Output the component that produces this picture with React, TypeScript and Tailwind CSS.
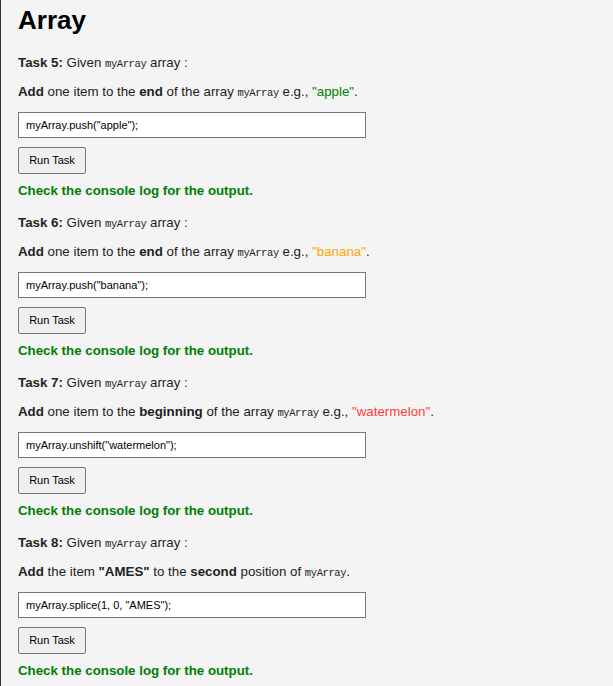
import React from 'react';

type Task = {
  num: number;
  desc: React.ReactNode;
  code: string;
};

const Code = ({ children }: { children: React.ReactNode }) => (
  <code className="font-['Liberation_Mono',monospace] text-[10.5px] tracking-[-0.4px]">{children}</code>
);

const tasks: Task[] = [
  {
    num: 5,
    desc: (
      <>
        <b>Add</b> one item to the <b>end</b> of the array <Code>myArray</Code> e.g.,{' '}
        <span className="text-[#008000]">"apple"</span>.
      </>
    ),
    code: 'myArray.push("apple");',
  },
  {
    num: 6,
    desc: (
      <>
        <b>Add</b> one item to the <b>end</b> of the array <Code>myArray</Code> e.g.,{' '}
        <span className="text-[#ffa500]">"banana"</span>.
      </>
    ),
    code: 'myArray.push("banana");',
  },
  {
    num: 7,
    desc: (
      <>
        <b>Add</b> one item to the <b>beginning</b> of the array <Code>myArray</Code> e.g.,{' '}
        <span className="text-[#ff3b3b]">"watermelon"</span>.
      </>
    ),
    code: 'myArray.unshift("watermelon");',
  },
  {
    num: 8,
    desc: (
      <>
        <b>Add</b> the item <b>"AMES"</b> to the <b>second</b> position of <Code>myArray</Code>.
      </>
    ),
    code: 'myArray.splice(1, 0, "AMES");',
  },
];

const TaskBlock = ({ task }: { task: Task }) => (
  <div className="flex flex-col items-start">
    <p className="leading-[15px]">
      <b>Task {task.num}:</b> Given <Code>myArray</Code> array :
    </p>
    <p className="leading-[15px] mt-[12px]">{task.desc}</p>
    <input
      readOnly
      value={task.code}
      className="mt-[11px] w-[348px] h-[26px] bg-white border border-[#767676] px-[7px] text-[11px] text-black outline-none"
    />
    <button className="mt-[9px] w-[68px] h-[27px] bg-[#efefef] border border-[#767676] rounded-[2px] text-[11px] text-black">
      Run Task
    </button>
    <p className="mt-[9px] leading-[15px] font-bold text-[#008000]">Check the console log for the output.</p>
  </div>
);

export default function App() {
  return (
    <div className="min-h-[686px] bg-[#f4f4f4] border-l border-[#333] px-[17px] pt-[5px] font-['Liberation_Sans',Arial,sans-serif] text-[13.3px] text-[#222]">
      <h1 className="text-[26px] leading-[30px] font-bold text-black">Array</h1>
      <div className="mt-[20px] flex flex-col gap-[17px]">
        {tasks.map((t) => (
          <TaskBlock key={t.num} task={t} />
        ))}
      </div>
    </div>
  );
}
